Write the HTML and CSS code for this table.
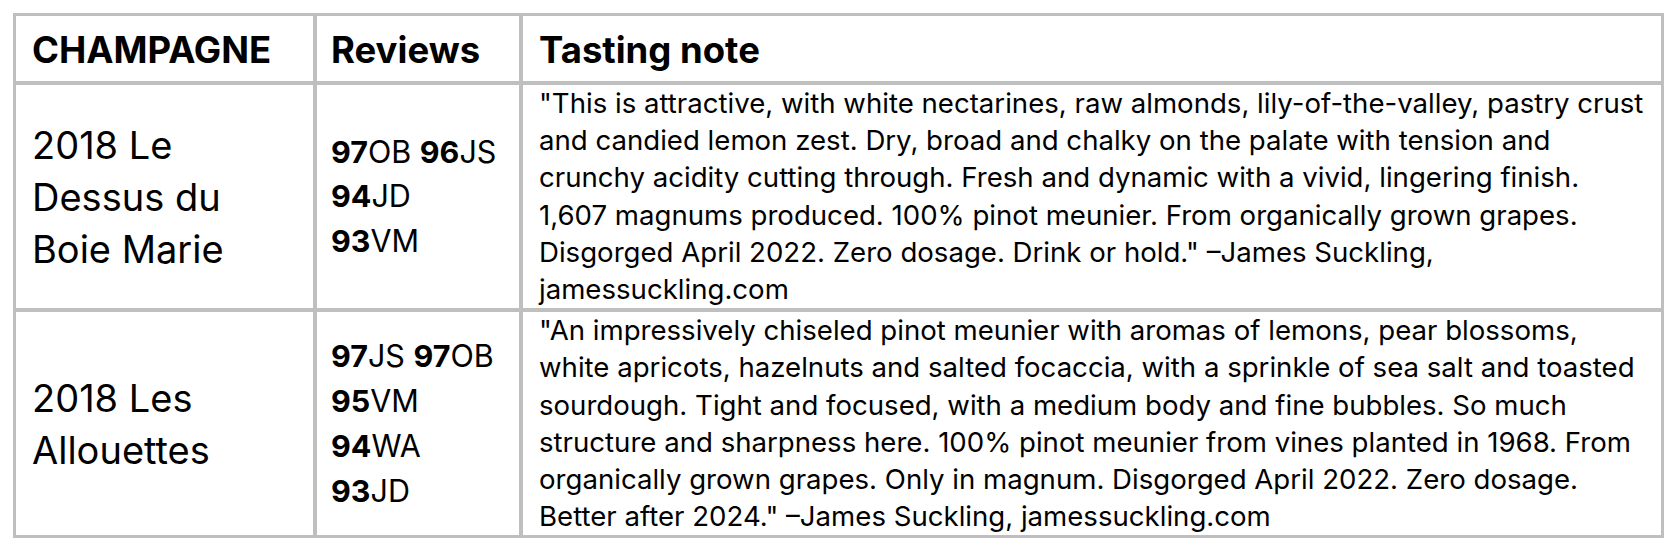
FILE: index.html
```html
<!DOCTYPE html>
<html lang="en">
<head>
<meta charset="utf-8">
<title>Champagne reviews</title>
<link rel="stylesheet" href="styles.css">
</head>
<body>
<table class="wine-table">
  <colgroup>
    <col class="col-name">
    <col class="col-reviews">
    <col class="col-note">
  </colgroup>
  <thead>
    <tr class="head-row">
      <th class="cell head name">CHAMPAGNE</th>
      <th class="cell head reviews">Reviews</th>
      <th class="cell head note">Tasting note</th>
    </tr>
  </thead>
  <tbody>
    <tr class="body-row">
      <td class="cell name">2018 Le<br>Dessus du<br>Boie Marie</td>
      <td class="cell reviews"><b>97</b>OB <b>96</b>JS<br><b>94</b>JD<br><b>93</b>VM</td>
      <td class="cell note">"This is attractive, with white nectarines, raw almonds, lily-of-the-valley, pastry crust<br>and candied lemon zest. Dry, broad and chalky on the palate with tension and<br>crunchy acidity cutting through. Fresh and dynamic with a vivid, lingering finish.<br>1,607 magnums produced. 100% pinot meunier. From organically grown grapes.<br>Disgorged April 2022. Zero dosage. Drink or hold." –James Suckling,<br>jamessuckling.com</td>
    </tr>
    <tr class="body-row">
      <td class="cell name">2018 Les<br>Allouettes</td>
      <td class="cell reviews"><b>97</b>JS <b>97</b>OB<br><b>95</b>VM<br><b>94</b>WA<br><b>93</b>JD</td>
      <td class="cell note">"An impressively chiseled pinot meunier with aromas of lemons, pear blossoms,<br>white apricots, hazelnuts and salted focaccia, with a sprinkle of sea salt and toasted<br>sourdough. Tight and focused, with a medium body and fine bubbles. So much<br>structure and sharpness here. 100% pinot meunier from vines planted in 1968. From<br>organically grown grapes. Only in magnum. Disgorged April 2022. Zero dosage.<br>Better after 2024." –James Suckling, jamessuckling.com</td>
    </tr>
  </tbody>
</table>
</body>
</html>
```
FILE: styles.css
```css
html, body {
  background: #ffffff;
}
body {
  margin: 13px;
  font-family: Inter, "Liberation Sans", sans-serif;
  color: #000000;
}
.wine-table {
  width: 1651px;
  table-layout: fixed;
  border-collapse: separate;
  border-spacing: 0;
  border: 3px solid #bfbfbf;
}
.col-name { width: 297px; }
.col-reviews { width: 206px; }
.col-note { width: 1142px; }

.cell {
  padding: 0 0 0 16px;
  text-align: left;
  vertical-align: middle;
  white-space: nowrap;
}
.cell + .cell {
  border-left: 4px solid #bfbfbf;
}
.cell.reviews {
  padding-left: 14px;
}
.body-row .cell {
  border-top: 4px solid #bfbfbf;
}

.head-row { height: 65px; }

.cell.name {
  font-size: 38px;
  line-height: 52px;
}

.cell.reviews {
  font-size: 30.5px;
  line-height: 44.7px;
}
.cell.reviews b { font-weight: 700; }

.cell.note {
  font-size: 27.6px;
  line-height: 37.2px;
  vertical-align: top;
}

.cell.head {
  font-size: 36.5px;
  font-weight: 700;
  line-height: 43px;
  padding-top: 3px;
  vertical-align: middle;
}
```
